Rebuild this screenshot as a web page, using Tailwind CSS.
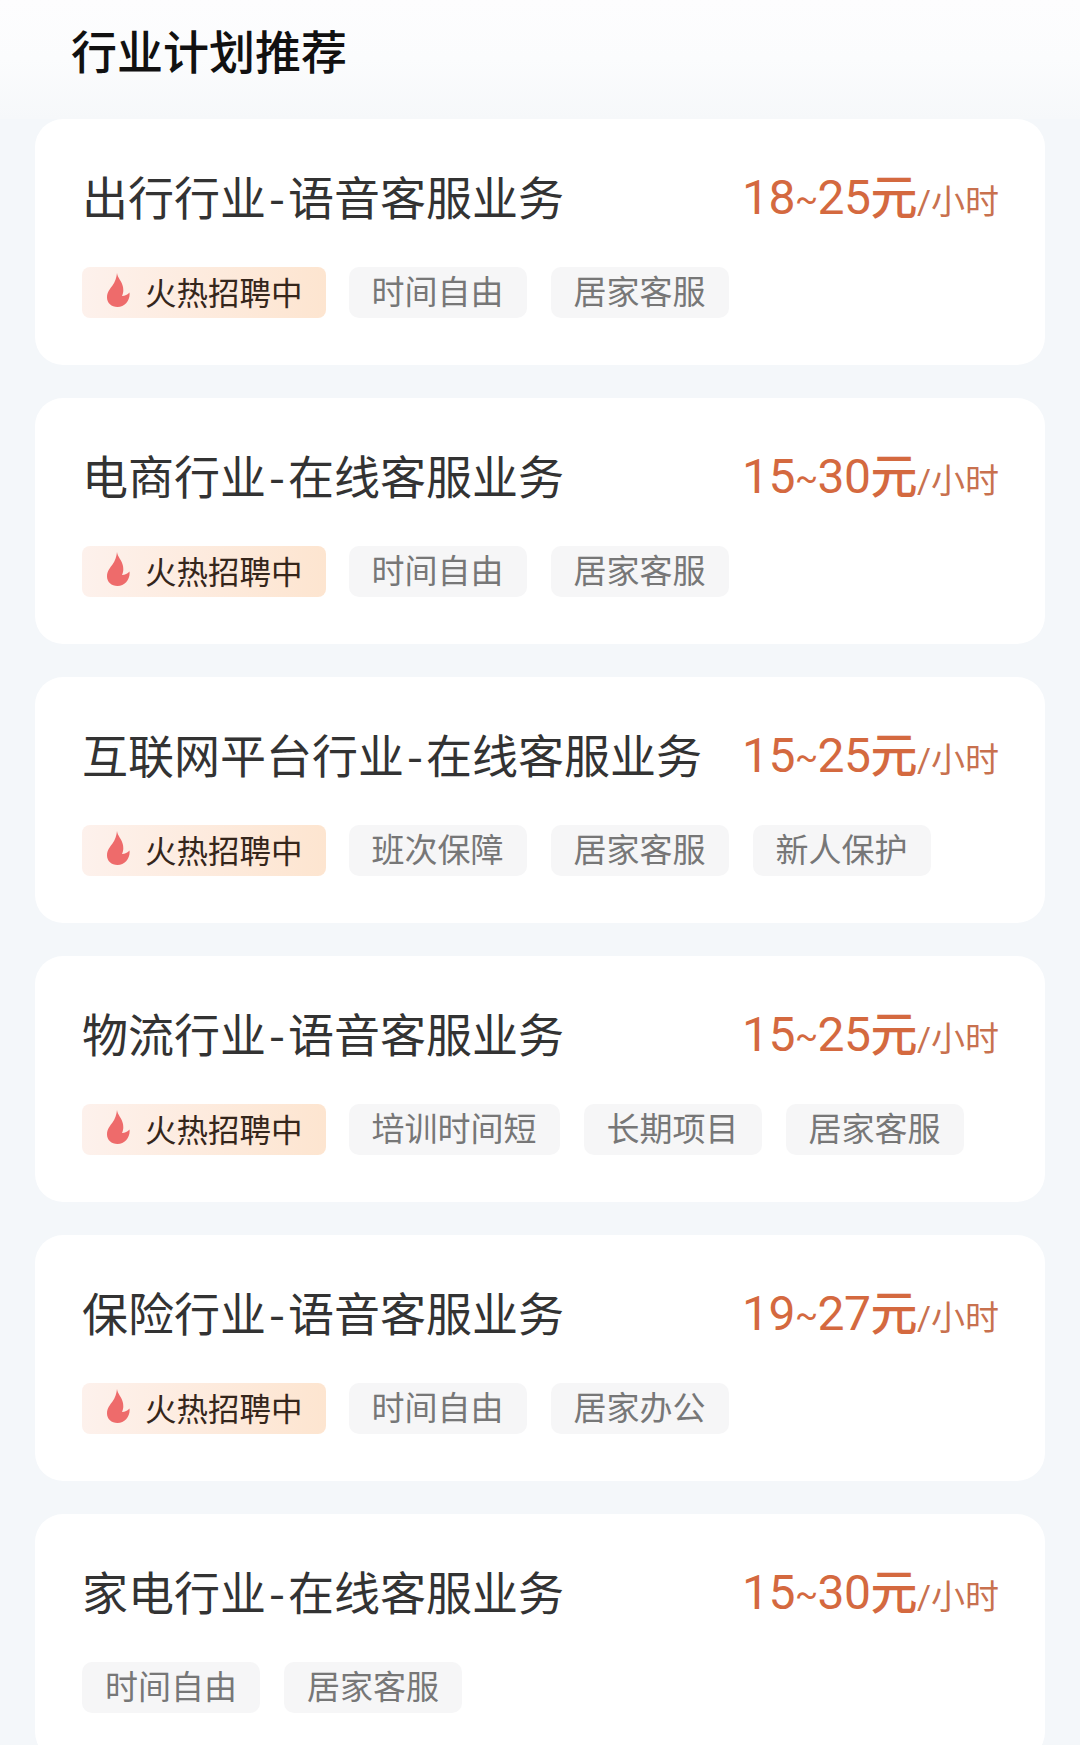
<!DOCTYPE html>
<html lang="zh-CN">
<head>
    <meta charset="UTF-8">
    <meta name="viewport" content="width=device-width, initial-scale=1.0">
    <title>行业计划推荐</title>
    <script src="https://cdn.jsdelivr.net/npm/@tailwindcss/browser@4"></script>
</head>
<body class="h-[1745px] overflow-hidden bg-[#f4f7fa] font-['Noto_Sans_CJK_SC',sans-serif]">

    <!-- Header -->
    <div class="h-[119px] pl-[71px] pt-[21px] bg-gradient-to-b from-[#fdfdfe] via-[#fbfcfd] to-[#f6f8fa]">
        <h1 class="text-[46px] leading-[56px] font-medium text-[#111]">行业计划推荐</h1>
    </div>

    <!-- Cards -->
    <div class="flex flex-col gap-[33px] mx-[35px]">

        <div class="h-[246px] bg-white rounded-[28px] pt-[52px]">
            <div class="flex justify-between items-center pl-[47px] pr-[46px] h-[50px]">
                <span class="mb-[2px] text-[46px] leading-[50px] text-[#333]">出行行业<span class="mx-[3px]">-</span>语音客服业务</span>
                <span class="flex items-baseline mt-[4px] text-[#d4693f] font-[450] tracking-[-0.5px] font-['Roboto','Noto_Sans_CJK_SC',sans-serif] text-[48px]">18<span class="relative -top-[3px] text-[34px]">~</span>25<span class="text-[47px]">元</span><span class="text-[34px] font-normal tracking-normal text-[#c8714f]">/小时</span></span>
            </div>
            <div class="flex gap-[24px] pl-[47px] mt-[46px]">
                <span class="flex items-center h-[51px] w-[244px] mr-[-1.500px] pl-[25px] pb-[2px] rounded-[8px] bg-gradient-to-r from-[#fdf1ec] to-[#fde5d0] text-[31.500px] text-[#35261b]">
                    <svg class="w-[23px] h-[34px] mr-[15px] mb-[3px]" viewBox="0 0 23 34"><path fill="#ee6b6b" d="M10 0C10.500 5 15 8 16 14C16.500 17 16.500 20 15 23C18 23 20.500 21.500 22.500 19.500C23.500 27 18 34 10.500 34C4.500 34 0 30 0 24.500C0 19 3 16 5.500 12.500C8 9 9.500 5 10 0z"/></svg>火热招聘中</span>
                <span class="flex items-center h-[51px] px-[23px] pb-[3px] rounded-[10px] bg-[#f6f6f7] text-[33px] text-[#777]">时间自由</span>
                <span class="flex items-center h-[51px] px-[23px] pb-[3px] rounded-[10px] bg-[#f6f6f7] text-[33px] text-[#777]">居家客服</span>
            </div>
        </div>

        <div class="h-[246px] bg-white rounded-[28px] pt-[52px]">
            <div class="flex justify-between items-center pl-[47px] pr-[46px] h-[50px]">
                <span class="mb-[2px] text-[46px] leading-[50px] text-[#333]">电商行业<span class="mx-[3px]">-</span>在线客服业务</span>
                <span class="flex items-baseline mt-[4px] text-[#d4693f] font-[450] tracking-[-0.5px] font-['Roboto','Noto_Sans_CJK_SC',sans-serif] text-[48px]">15<span class="relative -top-[3px] text-[34px]">~</span>30<span class="text-[47px]">元</span><span class="text-[34px] font-normal tracking-normal text-[#c8714f]">/小时</span></span>
            </div>
            <div class="flex gap-[24px] pl-[47px] mt-[46px]">
                <span class="flex items-center h-[51px] w-[244px] mr-[-1.500px] pl-[25px] pb-[2px] rounded-[8px] bg-gradient-to-r from-[#fdf1ec] to-[#fde5d0] text-[31.500px] text-[#35261b]">
                    <svg class="w-[23px] h-[34px] mr-[15px] mb-[3px]" viewBox="0 0 23 34"><path fill="#ee6b6b" d="M10 0C10.500 5 15 8 16 14C16.500 17 16.500 20 15 23C18 23 20.500 21.500 22.500 19.500C23.500 27 18 34 10.500 34C4.500 34 0 30 0 24.500C0 19 3 16 5.500 12.500C8 9 9.500 5 10 0z"/></svg>火热招聘中</span>
                <span class="flex items-center h-[51px] px-[23px] pb-[3px] rounded-[10px] bg-[#f6f6f7] text-[33px] text-[#777]">时间自由</span>
                <span class="flex items-center h-[51px] px-[23px] pb-[3px] rounded-[10px] bg-[#f6f6f7] text-[33px] text-[#777]">居家客服</span>
            </div>
        </div>

        <div class="h-[246px] bg-white rounded-[28px] pt-[52px]">
            <div class="flex justify-between items-center pl-[47px] pr-[46px] h-[50px]">
                <span class="mb-[2px] text-[46px] leading-[50px] text-[#333]">互联网平台行业<span class="mx-[3px]">-</span>在线客服业务</span>
                <span class="flex items-baseline mt-[4px] text-[#d4693f] font-[450] tracking-[-0.5px] font-['Roboto','Noto_Sans_CJK_SC',sans-serif] text-[48px]">15<span class="relative -top-[3px] text-[34px]">~</span>25<span class="text-[47px]">元</span><span class="text-[34px] font-normal tracking-normal text-[#c8714f]">/小时</span></span>
            </div>
            <div class="flex gap-[24px] pl-[47px] mt-[46px]">
                <span class="flex items-center h-[51px] w-[244px] mr-[-1.500px] pl-[25px] pb-[2px] rounded-[8px] bg-gradient-to-r from-[#fdf1ec] to-[#fde5d0] text-[31.500px] text-[#35261b]">
                    <svg class="w-[23px] h-[34px] mr-[15px] mb-[3px]" viewBox="0 0 23 34"><path fill="#ee6b6b" d="M10 0C10.500 5 15 8 16 14C16.500 17 16.500 20 15 23C18 23 20.500 21.500 22.500 19.500C23.500 27 18 34 10.500 34C4.500 34 0 30 0 24.500C0 19 3 16 5.500 12.500C8 9 9.500 5 10 0z"/></svg>火热招聘中</span>
                <span class="flex items-center h-[51px] px-[23px] pb-[3px] rounded-[10px] bg-[#f6f6f7] text-[33px] text-[#777]">班次保障</span>
                <span class="flex items-center h-[51px] px-[23px] pb-[3px] rounded-[10px] bg-[#f6f6f7] text-[33px] text-[#777]">居家客服</span>
                <span class="flex items-center h-[51px] px-[23px] pb-[3px] rounded-[10px] bg-[#f6f6f7] text-[33px] text-[#777]">新人保护</span>
            </div>
        </div>

        <div class="h-[246px] bg-white rounded-[28px] pt-[52px]">
            <div class="flex justify-between items-center pl-[47px] pr-[46px] h-[50px]">
                <span class="mb-[2px] text-[46px] leading-[50px] text-[#333]">物流行业<span class="mx-[3px]">-</span>语音客服业务</span>
                <span class="flex items-baseline mt-[4px] text-[#d4693f] font-[450] tracking-[-0.5px] font-['Roboto','Noto_Sans_CJK_SC',sans-serif] text-[48px]">15<span class="relative -top-[3px] text-[34px]">~</span>25<span class="text-[47px]">元</span><span class="text-[34px] font-normal tracking-normal text-[#c8714f]">/小时</span></span>
            </div>
            <div class="flex gap-[24px] pl-[47px] mt-[46px]">
                <span class="flex items-center h-[51px] w-[244px] mr-[-1.500px] pl-[25px] pb-[2px] rounded-[8px] bg-gradient-to-r from-[#fdf1ec] to-[#fde5d0] text-[31.500px] text-[#35261b]">
                    <svg class="w-[23px] h-[34px] mr-[15px] mb-[3px]" viewBox="0 0 23 34"><path fill="#ee6b6b" d="M10 0C10.500 5 15 8 16 14C16.500 17 16.500 20 15 23C18 23 20.500 21.500 22.500 19.500C23.500 27 18 34 10.500 34C4.500 34 0 30 0 24.500C0 19 3 16 5.500 12.500C8 9 9.500 5 10 0z"/></svg>火热招聘中</span>
                <span class="flex items-center h-[51px] px-[23px] pb-[3px] rounded-[10px] bg-[#f6f6f7] text-[33px] text-[#777]">培训时间短</span>
                <span class="flex items-center h-[51px] px-[23px] pb-[3px] rounded-[10px] bg-[#f6f6f7] text-[33px] text-[#777]">长期项目</span>
                <span class="flex items-center h-[51px] px-[23px] pb-[3px] rounded-[10px] bg-[#f6f6f7] text-[33px] text-[#777]">居家客服</span>
            </div>
        </div>

        <div class="h-[246px] bg-white rounded-[28px] pt-[52px]">
            <div class="flex justify-between items-center pl-[47px] pr-[46px] h-[50px]">
                <span class="mb-[2px] text-[46px] leading-[50px] text-[#333]">保险行业<span class="mx-[3px]">-</span>语音客服业务</span>
                <span class="flex items-baseline mt-[4px] text-[#d4693f] font-[450] tracking-[-0.5px] font-['Roboto','Noto_Sans_CJK_SC',sans-serif] text-[48px]">19<span class="relative -top-[3px] text-[34px]">~</span>27<span class="text-[47px]">元</span><span class="text-[34px] font-normal tracking-normal text-[#c8714f]">/小时</span></span>
            </div>
            <div class="flex gap-[24px] pl-[47px] mt-[46px]">
                <span class="flex items-center h-[51px] w-[244px] mr-[-1.500px] pl-[25px] pb-[2px] rounded-[8px] bg-gradient-to-r from-[#fdf1ec] to-[#fde5d0] text-[31.500px] text-[#35261b]">
                    <svg class="w-[23px] h-[34px] mr-[15px] mb-[3px]" viewBox="0 0 23 34"><path fill="#ee6b6b" d="M10 0C10.500 5 15 8 16 14C16.500 17 16.500 20 15 23C18 23 20.500 21.500 22.500 19.500C23.500 27 18 34 10.500 34C4.500 34 0 30 0 24.500C0 19 3 16 5.500 12.500C8 9 9.500 5 10 0z"/></svg>火热招聘中</span>
                <span class="flex items-center h-[51px] px-[23px] pb-[3px] rounded-[10px] bg-[#f6f6f7] text-[33px] text-[#777]">时间自由</span>
                <span class="flex items-center h-[51px] px-[23px] pb-[3px] rounded-[10px] bg-[#f6f6f7] text-[33px] text-[#777]">居家办公</span>
            </div>
        </div>

        <div class="h-[246px] bg-white rounded-[28px] pt-[52px]">
            <div class="flex justify-between items-center pl-[47px] pr-[46px] h-[50px]">
                <span class="mb-[2px] text-[46px] leading-[50px] text-[#333]">家电行业<span class="mx-[3px]">-</span>在线客服业务</span>
                <span class="flex items-baseline mt-[4px] text-[#d4693f] font-[450] tracking-[-0.5px] font-['Roboto','Noto_Sans_CJK_SC',sans-serif] text-[48px]">15<span class="relative -top-[3px] text-[34px]">~</span>30<span class="text-[47px]">元</span><span class="text-[34px] font-normal tracking-normal text-[#c8714f]">/小时</span></span>
            </div>
            <div class="flex gap-[24px] pl-[47px] mt-[46px]">
                <span class="flex items-center h-[51px] px-[23px] pb-[3px] rounded-[10px] bg-[#f6f6f7] text-[33px] text-[#777]">时间自由</span>
                <span class="flex items-center h-[51px] px-[23px] pb-[3px] rounded-[10px] bg-[#f6f6f7] text-[33px] text-[#777]">居家客服</span>
            </div>
        </div>

    </div>

</body>
</html>
